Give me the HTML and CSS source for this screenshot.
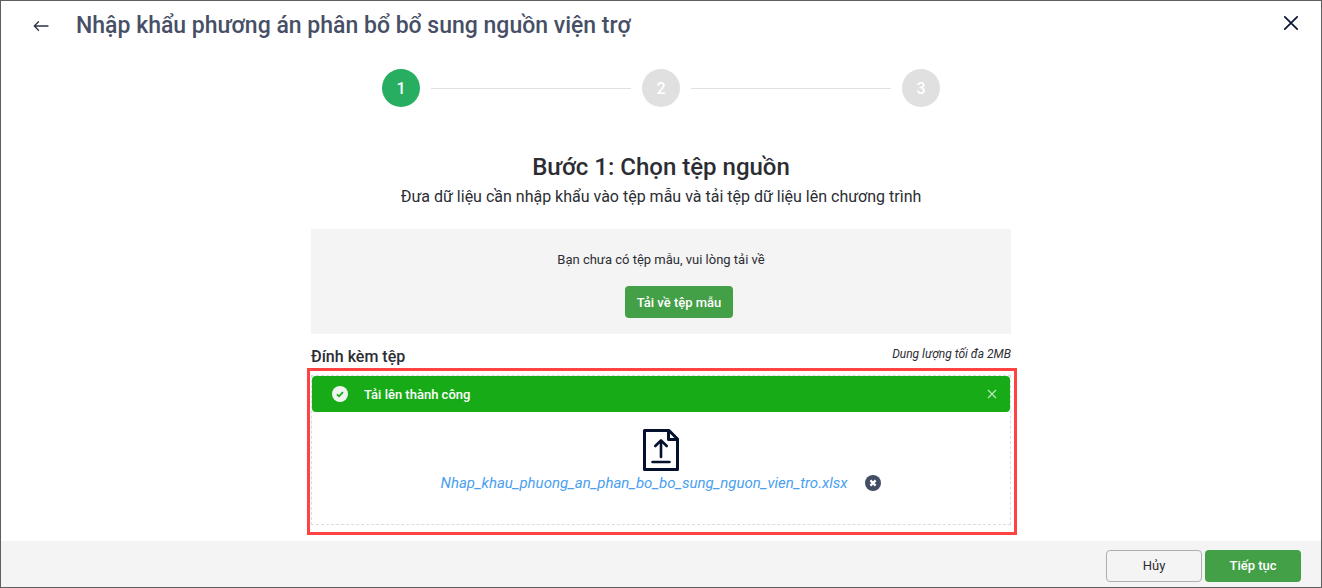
FILE: index.html
```
<!DOCTYPE html>
<html lang="vi">
<head>
    <meta charset="UTF-8">
    <meta name="viewport" content="width=device-width, initial-scale=1.0">
    <title>Nhập khẩu phương án phân bổ bổ sung nguồn viện trợ</title>
    <link rel="stylesheet" href="styles.css">
</head>
<body>
    <div class="page">
        <header class="header">
            <button type="button" class="icon-btn" aria-label="Quay lại">
                <svg width="16" height="12" viewBox="0 0 16 12" fill="none" stroke="#2b3247" stroke-width="1.3" stroke-linecap="round" stroke-linejoin="round">
                    <path d="M15 6H1.5M5.5 1.8L1.3 6l4.2 4.2"/>
                </svg>
            </button>
            <h1 class="title">Nhập khẩu phương án phân bổ bổ sung nguồn viện trợ</h1>
            <button type="button" class="icon-btn close-btn" aria-label="Đóng">
                <svg width="16" height="16" viewBox="0 0 16 16" fill="none" stroke="#0a1433" stroke-width="1.7" stroke-linecap="round">
                    <path d="M1.8 1.8l12.4 12.4M14.2 1.8L1.8 14.2"/>
                </svg>
            </button>
        </header>

        <main class="content">
            <div class="steps">
                <span class="step active">1</span>
                <span class="step-line"></span>
                <span class="step">2</span>
                <span class="step-line"></span>
                <span class="step">3</span>
            </div>

            <h2 class="step-title">Bước 1: Chọn tệp nguồn</h2>
            <p class="step-desc">Đưa dữ liệu cần nhập khẩu vào tệp mẫu và tải tệp dữ liệu lên chương trình</p>

            <section class="template-box">
                <p>Bạn chưa có tệp mẫu, vui lòng tải về</p>
                <button type="button" class="btn btn-primary btn-download">Tải về tệp mẫu</button>
            </section>

            <div class="attach-head">
                <h3>Đính kèm tệp</h3>
                <span class="limit">Dung lượng tối đa 2MB</span>
            </div>

            <section class="dropzone">
                <div class="toast">
                    <svg width="16" height="16" viewBox="0 0 16 16">
                        <circle cx="8" cy="8" r="8" fill="#f1f5f1"/>
                        <path d="M4.9 8.3l2.1 2 4-4.2" fill="none" stroke="#18ab18" stroke-width="1.8"/>
                    </svg>
                    <span class="toast-text">Tải lên thành công</span>
                    <button type="button" class="icon-btn" aria-label="Đóng thông báo">
                        <svg width="10" height="10" viewBox="0 0 10 10" fill="none" stroke="#c3e8c3" stroke-width="1.1">
                            <path d="M1 1l8 8M9 1L1 9"/>
                        </svg>
                    </button>
                </div>
                <svg class="file-icon" width="36" height="42" viewBox="0 0 36 42" fill="none" stroke="#04102e" stroke-width="3" stroke-linecap="round" stroke-linejoin="round">
                    <path d="M1.5 1.5H26L34.5 10V40.5H1.5Z"/>
                    <path d="M25.5 2v8.5H34"/>
                    <path d="M18 28V11.5M12.3 17L18 11.3l5.7 5.7M9.5 33h17" stroke-width="2.6"/>
                </svg>
                <div class="file-row">
                    <a href="#" class="file-name">Nhap_khau_phuong_an_phan_bo_bo_sung_nguon_vien_tro.xlsx</a>
                    <button type="button" class="icon-btn" aria-label="Xóa tệp">
                        <svg width="16" height="16" viewBox="0 0 16 16">
                            <circle cx="8" cy="8" r="8" fill="#434d63"/>
                            <path d="M5.4 5.4l5.2 5.2M10.6 5.4l-5.2 5.2" stroke="#fff" stroke-width="2.3"/>
                        </svg>
                    </button>
                </div>
            </section>
        </main>

        <footer class="footer">
            <button type="button" class="btn btn-cancel">Hủy</button>
            <button type="button" class="btn btn-primary">Tiếp tục</button>
        </footer>
    </div>
</body>
</html>
```
FILE: styles.css
```
* {
    box-sizing: border-box;
}
body {
    margin: 0;
    font-family: Roboto, "Liberation Sans", sans-serif;
    font-size: 13px;
    color: #2b2d33;
    background-color: #fff;
}
h1, h2, h3, p {
    margin: 0;
    font-weight: 500;
}
.page {
    min-height: 100vh;
    display: flex;
    flex-direction: column;
    border: 1px solid #5f5f5f;
}
.header {
    display: flex;
    align-items: center;
    height: 50px;
    padding: 0 22px 0 32px;
}
.icon-btn {
    display: flex;
    padding: 0;
    border: none;
    background: none;
    cursor: pointer;
}
.title {
    flex: 1;
    margin-left: 27px;
    font-size: 23px;
    line-height: 32px;
    color: #474f66;
}
.close-btn {
    margin-bottom: 6px;
}
.content {
    flex: 1;
    width: 100%;
    max-width: 700px;
    margin: 0 auto;
    padding: 18px 0 16px;
}
.steps {
    display: flex;
    justify-content: center;
    align-items: center;
    gap: 11px;
}
.step {
    display: flex;
    justify-content: center;
    align-items: center;
    width: 38px;
    height: 38px;
    border-radius: 50%;
    background-color: #e0e0e0;
    color: #fff;
    font-size: 16px;
    font-weight: 500;
}
.step.active {
    background-color: #27ae60;
}
.step-line {
    width: 200px;
    height: 1px;
    background-color: #e0e0e0;
}
.step-title {
    margin-top: 44px;
    font-size: 24px;
    line-height: 32px;
    text-align: center;
}
.step-desc {
    margin-top: 4px;
    font-size: 16px;
    font-weight: 400;
    line-height: 20px;
    text-align: center;
}
.template-box {
    display: flex;
    flex-direction: column;
    align-items: center;
    gap: 16px;
    margin-top: 22px;
    padding: 21px 0 16px;
    background-color: #f4f4f4;
}
.template-box p {
    font-weight: 400;
    line-height: 20px;
}
.btn {
    height: 32px;
    min-width: 96px;
    padding: 0 10px;
    border: none;
    border-radius: 4px;
    font-family: inherit;
    font-size: 13px;
    font-weight: 500;
    cursor: pointer;
}
.btn-primary {
    background-color: #43a047;
    color: #fff;
}
.btn-primary:hover {
    background-color: #388e3c;
}
.btn-download {
    margin-left: 36px;
    min-width: 108px;
}
.btn-cancel {
    border: 1px solid #afafaf;
    background-color: transparent;
    color: #2b2d33;
    font-weight: 400;
}
.attach-head {
    display: flex;
    justify-content: space-between;
    align-items: flex-start;
    padding-top: 12px;
    height: 41px;
}
.attach-head h3 {
    font-size: 16px;
    line-height: 22px;
}
.limit {
    font-size: 12px;
    font-style: oblique 14deg;
    line-height: 16px;
}
.dropzone {
    position: relative;
    display: flex;
    flex-direction: column;
    align-items: center;
    min-height: 150px;
    border: 1px dashed #dcdce0;
}
/* red frame around the upload area */
.dropzone::after {
    content: "";
    position: absolute;
    inset: -8px -7px -11px -5px;
    border: 3px solid #ff4343;
    pointer-events: none;
}
.toast {
    display: flex;
    align-items: center;
    align-self: stretch;
    height: 36px;
    padding: 0 13px 0 20px;
    border-radius: 4px;
    background-color: #18ab18;
    color: #fff;
}
.toast-text {
    flex: 1;
    margin-left: 16px;
    font-weight: 500;
}
.file-icon {
    margin-top: 17px;
}
.file-row {
    display: flex;
    align-items: center;
    gap: 18px;
    height: 24px;
}
.file-name {
    color: #4a9ff0;
    font-size: 15px;
    font-style: oblique 14deg;
    text-decoration: none;
}
.footer {
    display: flex;
    justify-content: flex-end;
    align-items: center;
    gap: 3px;
    height: 46px;
    padding: 3px 20px 0;
    background-color: #f4f4f4;
}
```
